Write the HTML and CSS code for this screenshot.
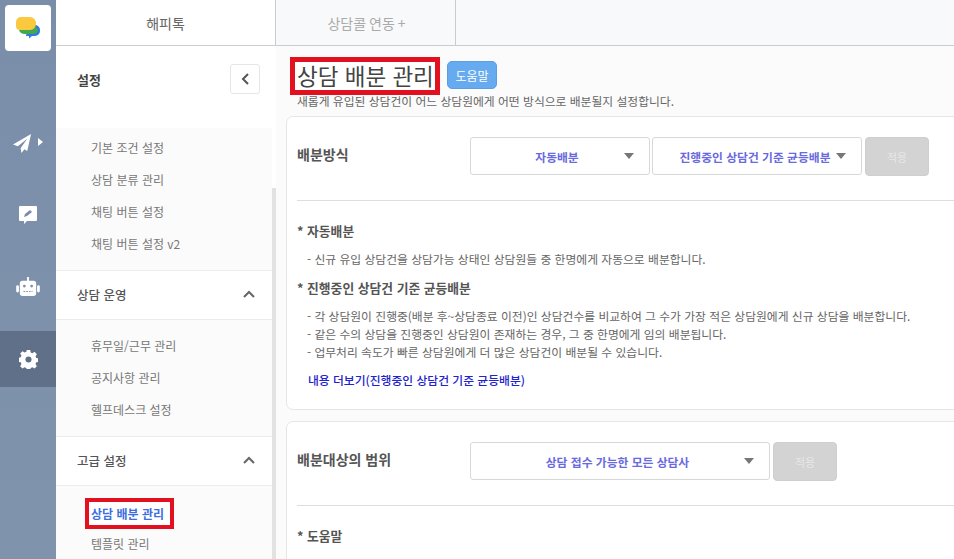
FILE: index.html
```html
<!DOCTYPE html>
<html lang="ko">
<head>
  <meta charset="UTF-8">
  <meta name="viewport" content="width=device-width, initial-scale=1.0">
  <title>상담 배분 관리</title>
  <link rel="stylesheet" href="styles.css">
</head>
<body>

  <div class="app">
    <!-- 왼쪽 아이콘 메뉴 -->
    <div class="rail">
      <div class="logo">
        <svg width="24" height="22" viewBox="0 0 24 22">
          <path d="M12 8h7a5 5 0 0 1 5 5v1a5 5 0 0 1-5 5h-3l-3 2.500V19h-3z" fill="#2f7be0"/>
          <path d="M4 10h15a4 4 0 0 1 3 3v0a5 5 0 0 1-5 4H8a5 5 0 0 1-5-5z" fill="#43a84f"/>
          <path d="M5 0h9a6 6 0 0 1 6 6v1a6 6 0 0 1-6 6H4a4 4 0 0 1-4-4V5a5 5 0 0 1 5-5z" fill="#fbc93d"/>
        </svg>
      </div>
      <div class="rail-item">
        <svg class="plane" width="19" height="19" viewBox="0 0 20 20"><path d="M19 0 0 11l5 2 10-8-7 10v0l1 5 3-4 3 2z" fill="#fff"/></svg>
        <span class="rail-arrow"></span>
      </div>
      <div class="rail-item">
        <svg width="20" height="20" viewBox="0 0 20 20"><path d="M2 1h16a1 1 0 0 1 1 1v13a1 1 0 0 1-1 1h-9l-3 3v-3H2a1 1 0 0 1-1-1V2a1 1 0 0 1 1-1z" fill="#fff"/><path d="m6 12 1-3 5-4 2 2-5 4z" fill="#7a8ea8"/></svg>
      </div>
      <div class="rail-item">
        <svg width="24" height="20" viewBox="0 0 26 22"><path d="M13 0a1.200 1.200 0 0 1 1 2v2h5a3 3 0 0 1 3 3v11a3 3 0 0 1-3 3H7a3 3 0 0 1-3-3V7a3 3 0 0 1 3-3h5V2a1.200 1.200 0 0 1 1-2z" fill="#fff"/><rect x="0" y="9" width="3" height="8" rx="1.500" fill="#fff"/><rect x="23" y="9" width="3" height="8" rx="1.500" fill="#fff"/><circle cx="9" cy="10" r="1.500" fill="#7a8ea8"/><circle cx="17" cy="10" r="1.500" fill="#7a8ea8"/><path d="M8 16h10" stroke="#7a8ea8" stroke-width="1" stroke-dasharray="2 1"/></svg>
      </div>
      <div class="rail-item active">
        <svg width="19" height="19" viewBox="0 0 20 20"><path d="M8.200 0h3.600l.5 2.500 1.800.8 2.200-1.400 2.500 2.500-1.400 2.200.8 1.800 2.500.5v3.600l-2.500.5-.8 1.800 1.400 2.200-2.500 2.500-2.200-1.400-1.800.8-.5 2.500H8.200l-.5-2.500-1.800-.8-2.200 1.400-2.500-2.500 1.400-2.200-.8-1.800-2.500-.5V8.200l2.500-.5.8-1.800-1.400-2.200 2.500-2.500 2.200 1.400 1.800-.8z" fill="#fff"/><circle cx="10" cy="10" r="3.200" fill="#5f7088"/></svg>
      </div>
    </div>

    <div class="main">
      <div class="tabs">
        <div class="tab on">해피톡</div>
        <div class="tab">상담콜 연동 +</div>
      </div>

      <div class="body">
        <!-- 설정 메뉴 -->
        <div class="side">
          <div class="side-head">
            <span>설정</span>
            <div class="fold">
              <svg width="10" height="14" viewBox="0 0 10 14"><path d="M8 2 3 7l5 5" fill="none" stroke="#555" stroke-width="2"/></svg>
            </div>
          </div>

          <ul class="menu first">
            <li>기본 조건 설정</li>
            <li>상담 분류 관리</li>
            <li>채팅 버튼 설정</li>
            <li>채팅 버튼 설정 v2</li>
          </ul>

          <div class="group">
            <span>상담 운영</span>
            <svg width="14" height="10" viewBox="0 0 14 10"><path d="m2 8 5-5 5 5" fill="none" stroke="#666" stroke-width="2"/></svg>
          </div>
          <ul class="menu">
            <li>휴무일/근무 관리</li>
            <li>공지사항 관리</li>
            <li>헬프데스크 설정</li>
          </ul>

          <div class="group">
            <span>고급 설정</span>
            <svg width="14" height="10" viewBox="0 0 14 10"><path d="m2 8 5-5 5 5" fill="none" stroke="#666" stroke-width="2"/></svg>
          </div>
          <ul class="menu last">
            <li class="current"><span class="mark-small">상담 배분 관리</span></li>
            <li>템플릿 관리</li>
          </ul>

          <div class="thumb"></div>
        </div>

        <div class="content">
          <div class="title-row">
            <h1 class="title">상담 배분 관리</h1>
            <button class="help-btn">도움말</button>
          </div>
          <p class="sub">새롭게 유입된 상담건이 어느 상담원에게 어떤 방식으로 배분될지 설정합니다.</p>

          <div class="card">
            <div class="row">
              <div class="label">배분방식</div>
              <div class="select w180"><span>자동배분</span><i class="caret"></i></div>
              <div class="select w210"><span>진행중인 상담건 기준 균등배분</span><i class="caret"></i></div>
              <button class="apply">적용</button>
            </div>
            <div class="desc">
              <h4>* 자동배분</h4>
              <p>- 신규 유입 상담건을 상담가능 상태인 상담원들 중 한명에게 자동으로 배분합니다.</p>
              <h4>* 진행중인 상담건 기준 균등배분</h4>
              <p>- 각 상담원이 진행중(배분 후~상담종료 이전)인 상담건수를 비교하여 그 수가 가장 적은 상담원에게 신규 상담을 배분합니다.<br>- 같은 수의 상담을 진행중인 상담원이 존재하는 경우, 그 중 한명에게 임의 배분됩니다.<br>- 업무처리 속도가 빠른 상담원에게 더 많은 상담건이 배분될 수 있습니다.</p>
              <a class="more">내용 더보기(진행중인 상담건 기준 균등배분)</a>
            </div>
          </div>

          <div class="card">
            <div class="row">
              <div class="label">배분대상의 범위</div>
              <div class="select w300"><span>상담 접수 가능한 모든 상담사</span><i class="caret"></i></div>
              <button class="apply">적용</button>
            </div>
            <div class="desc">
              <h4>* 도움말</h4>
            </div>
          </div>
        </div>
      </div>
    </div>
  </div>

</body>
</html>
```

FILE: styles.css
```css
* {
  box-sizing: border-box;
}
html, body {
  margin: 0;
  height: 100%;
  overflow: hidden;
}
body {
  font-family: "Noto Sans CJK KR", "Noto Sans", sans-serif;
  font-size: 12px;
  color: #555;
  background: #fff;
}
ul, p, h1, h4 {
  margin: 0;
  padding: 0;
}
ul {
  list-style: none;
}

.app {
  display: flex;
  height: 559px;
  overflow: hidden;
}

/* rail */
.rail {
  width: 56px;
  flex: none;
  background: linear-gradient(#7b8ea9, #7f93ad);
  display: flex;
  flex-direction: column;
  gap: 16px;
}
.logo {
  width: 46px;
  height: 46px;
  margin: 5px 5px 48px;
  background: #fff;
  border-radius: 4px;
  display: flex;
  align-items: center;
  justify-content: center;
}
.rail-item {
  height: 56px;
  display: flex;
  align-items: center;
  justify-content: center;
  position: relative;
}
.rail-item.active {
  background: #5f7088;
}
.plane {
  margin-right: 12px;
}
.rail-arrow {
  position: absolute;
  left: 38px;
  top: 23px;
  border-left: 5px solid #fff;
  border-top: 4px solid transparent;
  border-bottom: 4px solid transparent;
}

/* tabs */
.main {
  flex: 1;
  min-width: 0;
  display: flex;
  flex-direction: column;
}
.tabs {
  height: 46px;
  flex: none;
  display: flex;
  background: #f8f9fb;
  border-bottom: 1px solid #c9cdd2;
}
.tab {
  width: 180px;
  padding-left: 2px;
  border-right: 1px solid #c9cdd2;
  color: #aaa;
  font-size: 14px;
  word-spacing: -1px;
  display: flex;
  align-items: center;
  justify-content: center;
}
.tab.on {
  width: 220px;
  padding-left: 0;
  background: #fff;
  color: #666;
}

.body {
  flex: 1;
  min-height: 0;
  display: flex;
}

/* side menu */
.side {
  width: 220px;
  flex: none;
  background: #fff;
  position: relative;
  padding-right: 4px;
  overflow: hidden;
}
.side-head {
  height: 66px;
  margin-bottom: 16px;
  padding: 0 12px 0 21px;
  display: flex;
  align-items: center;
  justify-content: space-between;
  font-size: 13px;
  font-weight: 700;
  color: #444;
}
.fold {
  width: 30px;
  height: 30px;
  border: 1px solid #e6e6e6;
  border-radius: 3px;
  display: flex;
  align-items: center;
  justify-content: center;
}
.menu {
  background: #fbfbfb;
  padding: 10px 0 10px 35px;
  border-bottom: 1px solid #ececec;
}
.menu.first {
  padding-top: 4px;
}
.menu.last {
  border-bottom: 0;
}
.menu li {
  height: 32px;
  line-height: 32px;
  font-size: 12px;
  color: #777;
}
.menu li.current {
  font-weight: 700;
  color: #3d6fe0;
}
.mark-small {
  display: inline-block;
  margin: 2px 0 0 -6px;
  padding: 0 6px 0 2px;
  height: 31px;
  line-height: 23px;
  background: #fff;
  border: 4px solid #e3101f;
  white-space: nowrap;
}
.group {
  height: 49px;
  padding: 0 16px 2px 21px;
  display: flex;
  align-items: center;
  justify-content: space-between;
  font-size: 12.5px;
  font-weight: 500;
  color: #555;
  border-bottom: 1px solid #ececec;
}
.thumb {
  position: absolute;
  top: 142px;
  right: 0;
  bottom: 0;
  width: 4px;
  background: #e2e2e2;
}

/* content */
.content {
  flex: 1;
  min-width: 0;
  overflow: hidden;
  padding: 11px 0 0 10px;
  background: #fbfbfb;
}
.title-row {
  display: flex;
  align-items: flex-start;
  margin-left: 4px;
}
.title {
  width: 150px;
  height: 38px;
  padding: 0 2px;
  line-height: 27px;
  border: 5px solid #e3101f;
  background: #fff;
  font-size: 22.5px;
  font-weight: 400;
  color: #444;
  white-space: nowrap;
}
.help-btn {
  width: 50px;
  height: 28px;
  margin: 4px 0 0 7px;
  padding: 0;
  background: #66aaf0;
  border: 1px solid #5b9ee3;
  border-radius: 5px;
  color: #fff;
  font: 400 12px "Noto Sans CJK KR", sans-serif;
}
.sub {
  margin: -1px 0 8px 11px;
  height: 14px;
  line-height: 14px;
  font-size: 11.8px;
  color: #666;
  white-space: nowrap;
}
.card {
  width: 720px;
  margin-bottom: 11px;
  padding: 0 10px;
  background: #fff;
  border: 1px solid #e6e6e6;
  border-radius: 7px;
}
.row {
  display: flex;
  align-items: flex-start;
  padding: 20px 0 24px;
  border-bottom: 1px solid #dedede;
}
.label {
  width: 173px;
  flex: none;
  line-height: 35px;
  font-size: 14px;
  font-weight: 700;
  color: #555;
}
.select {
  height: 38px;
  margin-right: 2px;
  background: #fff;
  border: 1px solid #d8d8d8;
  border-radius: 3px;
  display: flex;
  align-items: center;
  justify-content: center;
  position: relative;
  font-size: 11.8px;
  font-weight: 700;
  color: #6a6ae0;
}
.w180 {
  width: 180px;
  padding-right: 6px;
}
.w210 {
  width: 210px;
  padding-right: 4px;
}
.w300 {
  width: 300px;
  padding-right: 5px;
}
.caret {
  position: absolute;
  right: 15px;
  top: 15px;
  border-top: 6px solid #777;
  border-left: 5px solid transparent;
  border-right: 5px solid transparent;
}
.apply {
  width: 64px;
  height: 39px;
  margin-left: 1px;
  padding: 0;
  background: #d3d3d3;
  border: 1px solid #cfcfcf;
  border-radius: 4px;
  color: #e6e6e6;
  font: 400 11px "Noto Sans CJK KR", sans-serif;
}
.desc {
  padding-top: 20px;
  height: 208px;
}
.desc h4 {
  height: 20px;
  line-height: 20px;
  font-size: 12.8px;
  font-weight: 700;
  color: #555;
}
.desc p {
  margin: 9px 0 10px 10px;
  line-height: 18px;
  font-size: 11.8px;
  color: #666;
  white-space: nowrap;
}
.more {
  display: block;
  margin: 9px 0 0 11px;
  line-height: 18px;
  font-size: 11.8px;
  font-weight: 500;
  color: #2222cc;
}
```
